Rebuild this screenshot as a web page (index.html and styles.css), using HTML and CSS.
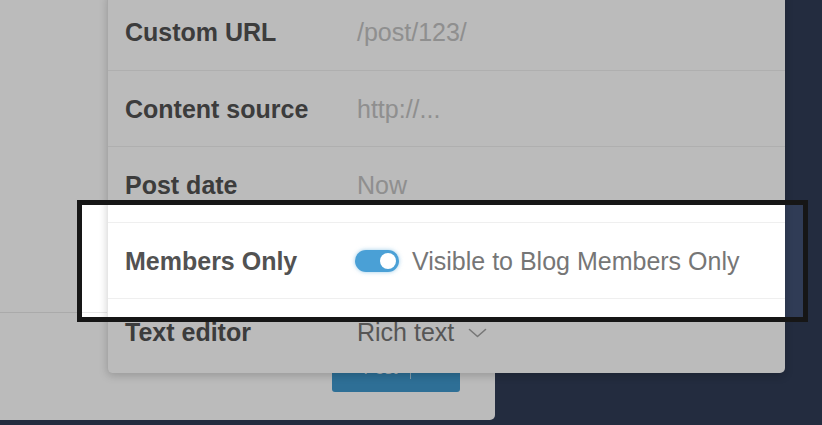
FILE: index.html
```html
<!DOCTYPE html>
<html lang="en">
<head>
<meta charset="utf-8">
<title>Post settings</title>
<link rel="stylesheet" href="styles.css">
</head>
<body>
<div class="stage">
  <section class="editor">
    <div class="editor-body"></div>
    <footer class="editor-footer">
      <button class="publish" type="button"><span class="publish-label">Post</span><span class="publish-split"></span><span class="publish-caret">&#9662;</span></button>
    </footer>
  </section>

  <div class="settings">
    <div class="row">
      <span class="label">Custom URL</span>
      <span class="value placeholder">/post/123/</span>
    </div>
    <div class="row">
      <span class="label">Content source</span>
      <span class="value placeholder">http://...</span>
    </div>
    <div class="row">
      <span class="label">Post date</span>
      <span class="value placeholder">Now</span>
    </div>
    <div class="row">
      <span class="label">Members Only</span>
      <span class="value toggle-field">
        <span class="toggle"><span class="knob"></span></span>
        <span class="text">Visible to Blog Members Only</span>
      </span>
    </div>
    <div class="row">
      <span class="label">Text editor</span>
      <span class="value select">
        <span class="text">Rich text</span>
        <svg class="chevron" width="19" height="10" viewBox="0 0 19 10"><polyline points="1.5,1.5 9.5,8.5 17.5,1.5" fill="none" stroke="#a3a3a3" stroke-width="1.6" stroke-linecap="round" stroke-linejoin="round"/></svg>
      </span>
    </div>
  </div>

  <div class="spotlight"></div>
</div>
</body>
</html>
```
FILE: styles.css
```css
html, body {
  margin: 0;
  height: 100%;
}

body {
  background: #303c56;
  overflow: hidden;
  font-family: "Liberation Sans", Arial, sans-serif;
}

.stage {
  position: relative;
  width: 822px;
  height: 425px;
}

/* background editor window */
.editor {
  width: 495px;
  height: 420px;
  background: #ffffff;
  border-bottom-right-radius: 5px;
  display: flex;
  flex-direction: column;
}

.editor-body {
  flex: 1;
}

.editor-footer {
  height: 108px;
  box-sizing: border-box;
  border-top: 1px solid #e8e8e8;
  display: flex;
  justify-content: flex-end;
  align-items: flex-end;
  padding: 0 35px 28px 0;
}

.publish {
  width: 128px;
  height: 46px;
  border: 0;
  border-radius: 3px;
  background: #3f98cd;
  color: rgba(255, 255, 255, 0.85);
  font-family: "Liberation Sans", Arial, sans-serif;
  font-size: 17px;
  display: flex;
  align-items: center;
  justify-content: center;
  gap: 12px;
  padding: 0;
}

.publish-split {
  width: 1px;
  height: 20px;
  background: rgba(255, 255, 255, 0.6);
}

.publish-caret {
  font-size: 12px;
}

/* settings popover */
.settings {
  position: absolute;
  left: 107px;
  top: -6px;
  width: 678px;
  box-sizing: border-box;
  background: #ffffff;
  border-left: 1px solid #e6e6e6;
  border-radius: 0 0 5px 5px;
  box-shadow: 0 3px 8px rgba(0, 0, 0, 0.18);
}

.row {
  height: 76px;
  box-sizing: border-box;
  display: grid;
  grid-template-columns: 232px 1fr;
  align-items: center;
  padding-left: 17px;
  border-top: 1px solid #efefef;
}

.row:first-child {
  border-top: 0;
}

.row:last-child {
  height: 75px;
  padding-bottom: 8px;
}

.label {
  font-size: 25px;
  font-weight: 700;
  color: #525252;
  line-height: 1.2;
}

.value {
  font-size: 25px;
  line-height: 1.2;
}

.placeholder {
  color: #c3c3c3;
}

.text {
  color: #767676;
}

.toggle-field {
  display: flex;
  align-items: center;
  gap: 13px;
  margin-left: -2px;
}

.toggle {
  width: 44px;
  height: 22px;
  box-sizing: border-box;
  border-radius: 11px;
  background: #4aa0d6;
  box-shadow: 0 0 4px rgba(74, 160, 214, 0.55);
  display: flex;
  justify-content: flex-end;
  align-items: center;
  padding-right: 3px;
}

.knob {
  width: 16px;
  height: 16px;
  border-radius: 50%;
  background: #ffffff;
}

.select {
  display: flex;
  align-items: center;
  gap: 14px;
}

.chevron {
  display: block;
  margin-top: 2px;
}

/* highlight frame, dims everything outside */
.spotlight {
  position: absolute;
  left: 77px;
  top: 200px;
  width: 731px;
  height: 122px;
  box-sizing: border-box;
  border: 5px solid #161616;
  box-shadow: 0 0 0 1200px rgba(0, 0, 0, 0.267);
}
```
